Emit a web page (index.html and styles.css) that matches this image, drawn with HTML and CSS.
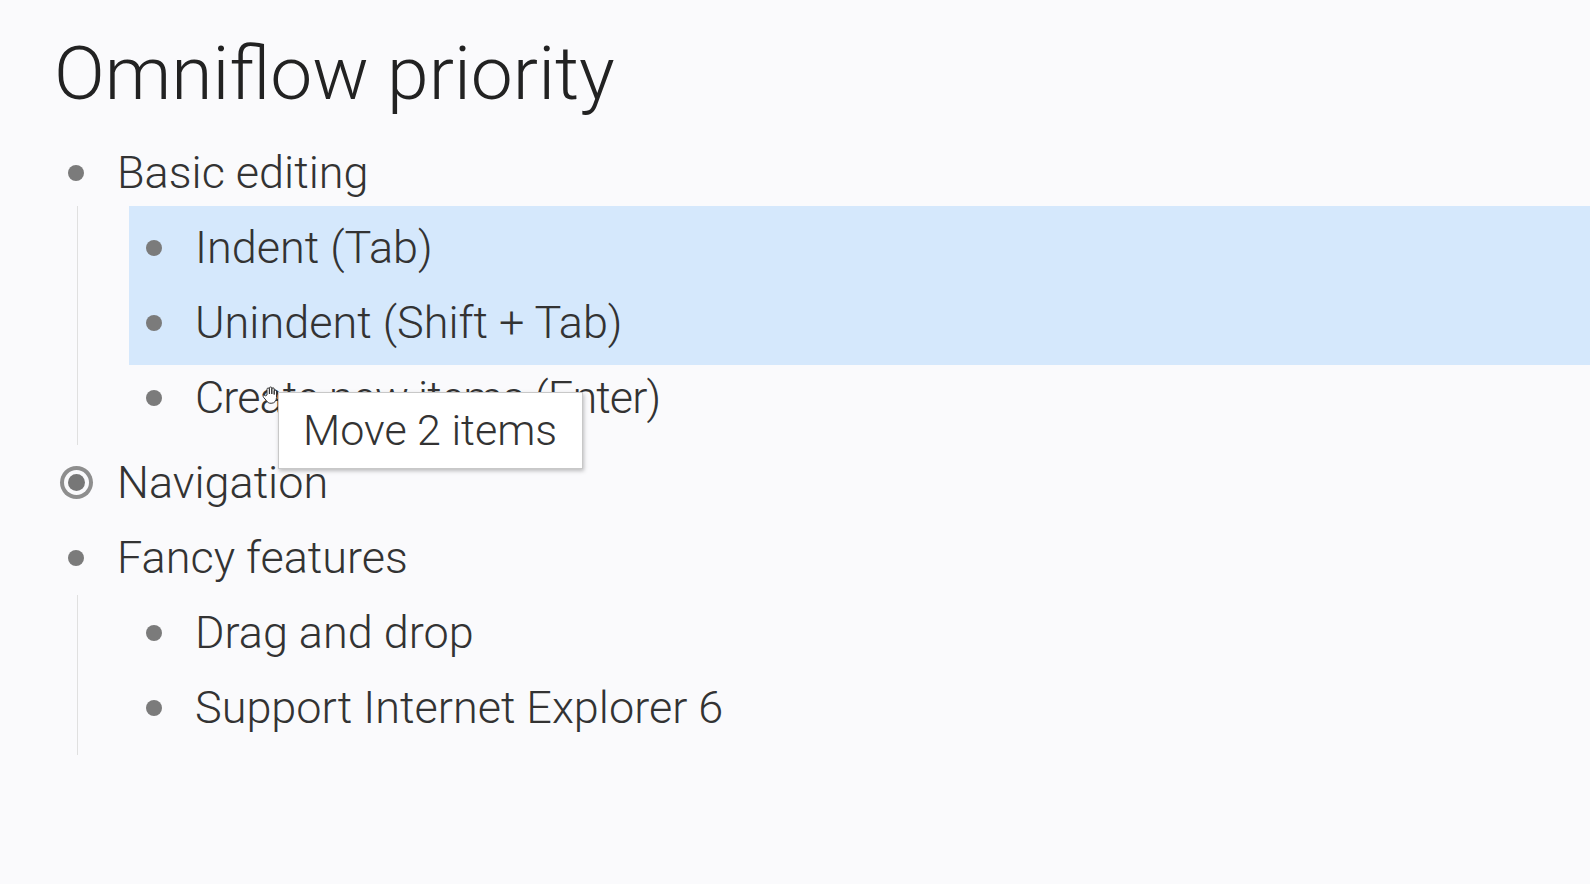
FILE: index.html
```html
<!DOCTYPE html>
<html lang="en">
<head>
    <meta charset="UTF-8">
    <title>Omniflow priority</title>
    <link rel="stylesheet" href="styles.css">
</head>
<body>
    <h1 class="title">Omniflow priority</h1>
    <ul class="outline">
        <li class="node">
            <div class="row"><span class="bullet"></span><span class="label">Basic editing</span></div>
            <ul class="children">
                <li class="selection">
                    <div class="row"><span class="bullet"></span><span class="label">Indent (Tab)</span></div>
                    <div class="row"><span class="bullet"></span><span class="label">Unindent (Shift + Tab)</span></div>
                </li>
                <li class="node">
                    <div class="row drop-target">
                        <span class="bullet"></span><span class="label">Create new items (Enter)</span>
                        <svg class="cursor" width="16" height="18" viewBox="0 0 16 18">
                            <path d="M5 9V3.2a1.2 1.2 0 0 1 2.4 0V8V2.2a1.2 1.2 0 0 1 2.4 0V8V3a1.2 1.2 0 0 1 2.4 0v5.5V5a1.2 1.2 0 0 1 2.3 0v6.5c0 3.2-2 5.8-5.4 5.8-2.4 0-3.6-1-4.8-2.8L1.5 11.3a1.2 1.2 0 0 1 1.9-1.5z" fill="#fff" stroke="#333" stroke-width="1" stroke-linejoin="round"/>
                        </svg>
                        <div class="tooltip">Move 2 items</div>
                    </div>
                </li>
            </ul>
        </li>
        <li class="node">
            <div class="row"><span class="bullet collapsed"></span><span class="label">Navigation</span></div>
        </li>
        <li class="node">
            <div class="row"><span class="bullet"></span><span class="label">Fancy features</span></div>
            <ul class="children">
                <li class="node">
                    <div class="row"><span class="bullet"></span><span class="label">Drag and drop</span></div>
                </li>
                <li class="node">
                    <div class="row"><span class="bullet"></span><span class="label">Support Internet Explorer 6</span></div>
                </li>
            </ul>
        </li>
    </ul>
</body>
</html>
```

FILE: styles.css
```css
body {
    margin: 0;
    padding: 0;
    background-color: #fafafc;
    font-family: Roboto, "Noto Sans", Arial, sans-serif;
    font-weight: 300;
    color: #333;
}
.title {
    margin: 0;
    padding: 28px 0 0 54px;
    height: 107px;
    box-sizing: border-box;
    font-size: 75px;
    font-weight: 300;
    line-height: 90px;
    color: #222;
}
.outline,
.children {
    list-style: none;
    margin: 0;
    padding: 0;
}
.outline {
    padding-left: 56px;
    margin-top: 28px;
}
.children {
    margin-left: 21px;
    border-left: 1px solid #e0e0e0;
    padding-left: 56px;
    padding-bottom: 10px;
}
.row {
    display: flex;
    align-items: center;
    height: 75px;
    font-size: 45px;
}
.bullet {
    display: flex;
    justify-content: center;
    align-items: center;
    width: 40px;
    height: 40px;
    margin-right: 21px;
    flex-shrink: 0;
}
.bullet::before {
    content: "";
    width: 16px;
    height: 16px;
    border-radius: 50%;
    background-color: #7b7b7b;
}
.bullet.collapsed::before {
    width: 17px;
    height: 17px;
    background-color: #777;
    box-shadow: 0 0 0 4px #fafafc, 0 0 0 8px #8e8e8e;
}
.label {
    white-space: nowrap;
}
.selection {
    background-color: #d5e8fc;
    margin: -4px 0 -5px -5px;
    padding: 4px 0 5px 5px;
}
.drop-target {
    position: relative;
}
.drop-target .label {
    letter-spacing: -0.9px;
}
.tooltip {
    position: absolute;
    left: 144px;
    top: 32px;
    width: 305px;
    height: 77px;
    box-sizing: border-box;
    padding-left: 24px;
    background-color: #fff;
    border: 1px solid #c8c8c8;
    box-shadow: 1px 2px 4px rgba(0, 0, 0, 0.25);
    font-size: 43px;
    line-height: 75px;
    color: #333;
}
.cursor {
    position: absolute;
    left: 128px;
    top: 26px;
}
```
